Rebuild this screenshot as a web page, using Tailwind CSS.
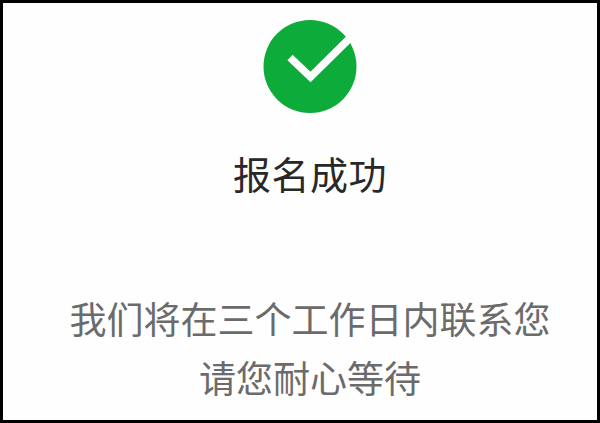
<!DOCTYPE html>
<html lang="zh-CN">
<head>
  <meta charset="UTF-8" />
  <meta name="viewport" content="width=device-width, initial-scale=1.0" />
  <title>报名成功</title>
  <script src="https://cdn.jsdelivr.net/npm/@tailwindcss/browser@4"></script>
</head>
<body class="bg-white">
  <main class="w-[600px] h-[423px] overflow-hidden bg-[#fefefe] border-[3px] border-black flex flex-col items-center pt-[17px] pl-[20px] font-['Noto_Sans_CJK_SC','Noto_Sans',sans-serif]">
    <svg class="w-[94px] h-[94px] shrink-0" viewBox="0 0 94 94">
      <circle cx="47" cy="46.5" r="46.5" fill="#0dab3a" />
      <path d="M27 37.5 L47.5 57 L87 18" fill="none" stroke="#fff" stroke-width="7.5" />
    </svg>
    <h1 class="mt-[35px] text-[38px] leading-[48px] tracking-[0.5px] text-[#282828] font-normal">报名成功</h1>
    <p class="mt-[92px] text-[37px] leading-[59px] text-[#6b6b6b] text-center whitespace-nowrap">我们将在三个工作日内联系您<br />请您耐心等待</p>
  </main>
</body>
</html>
